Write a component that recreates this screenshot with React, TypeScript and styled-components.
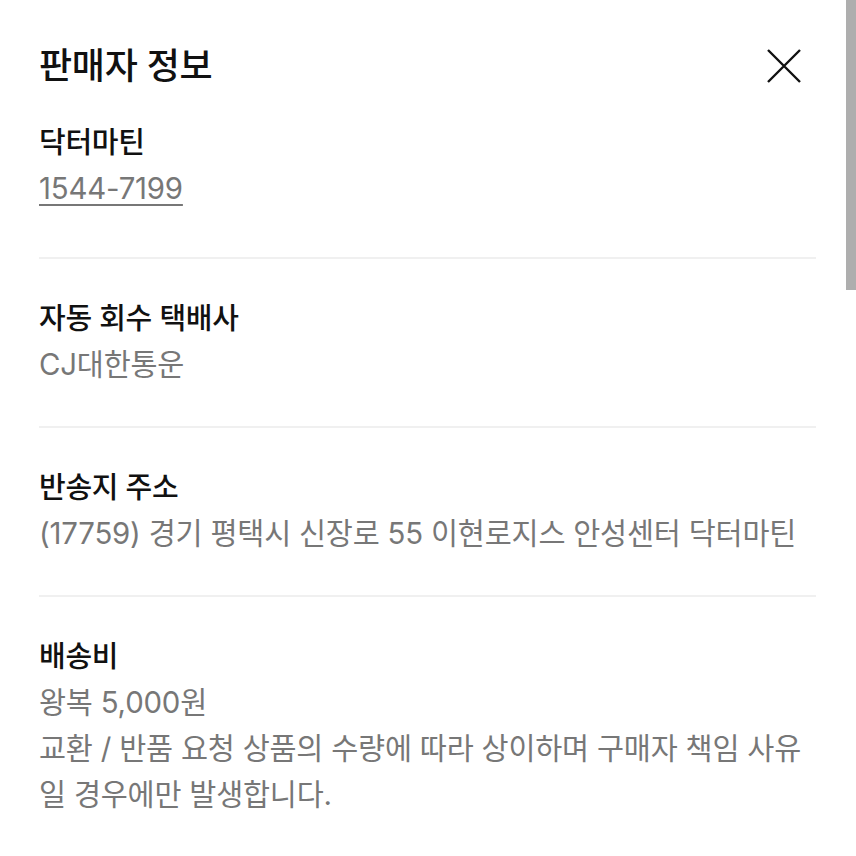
import React from "react";
import styled, { createGlobalStyle } from "styled-components";

const Global = createGlobalStyle`
  html, body { margin: 0; padding: 0; background: #fff; }
  body { font-family: "Inter", "Noto Sans CJK KR", "Noto Sans", sans-serif; overflow: hidden; }
`;

const Page = styled.div`
  position: relative;
  width: 856px;
  height: 856px;
  background: #fff;
  overflow: hidden;
`;

const Content = styled.div`
  padding: 43px 40px 0 39px;
  display: flex;
  flex-direction: column;
`;

const TitleRow = styled.div`
  display: flex;
  align-items: center;
  justify-content: space-between;
  padding-right: 15px;
`;

const Title = styled.h1`
  margin: 0;
  font-size: 36px;
  line-height: 46px;
  font-weight: 500;
  color: #111;
  letter-spacing: -0.3px;
`;

const CloseButton = styled.button`
  border: 0;
  background: none;
  padding: 0;
  width: 34px;
  height: 34px;
  display: flex;
  cursor: pointer;
`;

const Section = styled.section<{ $top: number; $bottom: number; $last?: boolean }>`
  padding: ${(p) => p.$top}px 0 ${(p) => p.$bottom}px;
  border-bottom: ${(p) => (p.$last ? "none" : "2px solid #f0f0f0")};
`;

const Label = styled.h2`
  margin: 0;
  font-size: 29px;
  line-height: 46px;
  font-weight: 500;
  color: #111;
  letter-spacing: -0.3px;
`;

const Value = styled.p`
  margin: 0;
  font-size: 29.4px;
  line-height: 46px;
  font-weight: 400;
  color: #777;
  letter-spacing: -0.2px;
  word-break: keep-all;
`;

const Phone = styled.a`
  color: #777;
  text-decoration: underline;
  text-decoration-thickness: 2px;
  text-underline-offset: 5px;
`;

const ScrollThumb = styled.div`
  position: absolute;
  top: 0;
  right: 0;
  width: 10px;
  height: 290px;
  background: #aeaeae;
`;

export default function App() {
  return (
    <Page>
      <Global />
      <Content>
        <TitleRow>
          <Title>판매자 정보</Title>
          <CloseButton aria-label="닫기">
            <svg width="34" height="34" viewBox="0 0 34 34">
              <path d="M1 1 L33 33 M33 1 L1 33" stroke="#111" strokeWidth="2.4" fill="none" />
            </svg>
          </CloseButton>
        </TitleRow>
        <Section $top={31} $bottom={45}>
          <Label>닥터마틴</Label>
          <Value>
            <Phone href="#">1544-7199</Phone>
          </Value>
        </Section>
        <Section $top={37} $bottom={38}>
          <Label>자동 회수 택배사</Label>
          <Value>CJ대한통운</Value>
        </Section>
        <Section $top={37} $bottom={38}>
          <Label>반송지 주소</Label>
          <Value>(17759) 경기 평택시 신장로 55 이현로지스 안성센터 닥터마틴</Value>
        </Section>
        <Section $top={37} $bottom={38} $last>
          <Label>배송비</Label>
          <Value>왕복 5,000원</Value>
          <Value>교환 / 반품 요청 상품의 수량에 따라 상이하며 구매자 책임 사유 일 경우에만 발생합니다.</Value>
        </Section>
      </Content>
      <ScrollThumb />
    </Page>
  );
}
